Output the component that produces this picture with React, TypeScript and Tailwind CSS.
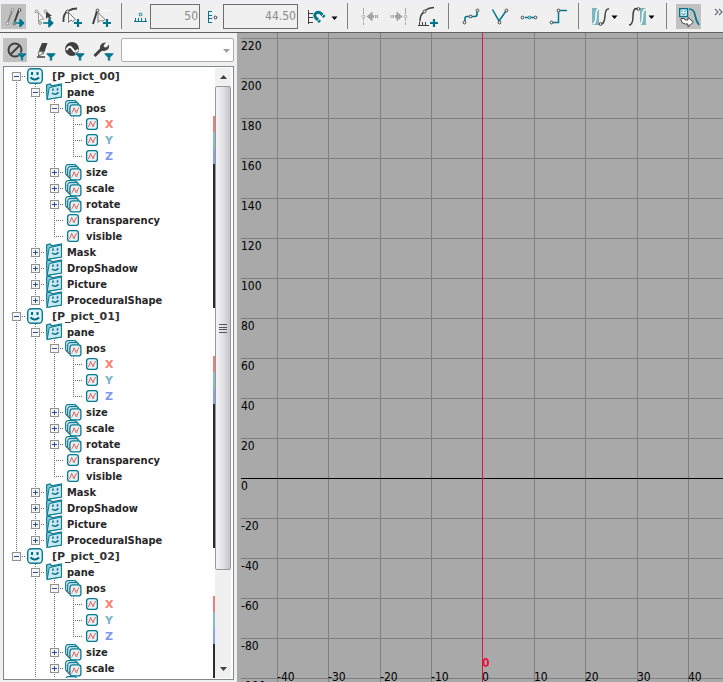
import type { ReactNode } from "react";

const TEAL = "#00758c";
const DARK = "#404040";

type NodeKind = "root" | "folder" | "group" | "curve";
type TreeNode = {
  label: string;
  kind: NodeKind;
  tone?: "x" | "y" | "z";
  open?: boolean;
  strip?: boolean;
  children?: TreeNode[];
};

const axes: TreeNode[] = [
  { label: "X", kind: "curve", tone: "x" },
  { label: "Y", kind: "curve", tone: "y" },
  { label: "Z", kind: "curve", tone: "z" },
];

function picture(label: string): TreeNode {
  return {
    label,
    kind: "root",
    open: true,
    children: [
      {
        label: "pane",
        kind: "folder",
        open: true,
        children: [
          { label: "pos", kind: "group", open: true, children: axes },
          { label: "size", kind: "group", strip: true },
          { label: "scale", kind: "group", strip: true },
          { label: "rotate", kind: "group", strip: true },
          { label: "transparency", kind: "curve", strip: true },
          { label: "visible", kind: "curve", strip: true },
        ],
      },
      { label: "Mask", kind: "folder", strip: true },
      { label: "DropShadow", kind: "folder", strip: true },
      { label: "Picture", kind: "folder", strip: true },
      { label: "ProceduralShape", kind: "folder", strip: true },
    ],
  };
}

const pictures = [picture("[P_pict_00]"), picture("[P_pict_01]"), picture("[P_pict_02]")];

const toneText = { x: "text-[#f0826e]", y: "text-[#7cb6c8]", z: "text-[#8296f0]" };
const toneStrip = { x: "bg-[#f07d78]", y: "bg-[#87bcc8]", z: "bg-[#8ca0f5]" };

function NodeIcon({ kind }: { kind: NodeKind }) {
  return (
    <svg width="18" height="16" viewBox="0 0 18 16" className="shrink-0 overflow-visible" aria-hidden="true">
      {kind === "root" && (
        <>
          <rect x="1.7" y="0.7" width="14.6" height="14.6" rx="3.5" fill="#dcf1f5" stroke="#087a91" strokeWidth="1.4" />
          <path d="M6 4v3M11.5 4v3" stroke="#006e87" strokeWidth="2" />
          <path d="M4.5 9.5q4.3 4 8.6 0" fill="none" stroke="#006e87" strokeWidth="2" />
        </>
      )}
      {kind === "folder" && (
        <>
          <path d="M1.600 3.200V1L5.200 0 6.800 1.800 16.400 0V13L2 15.300Z" fill="#8fc9d6" stroke="#087a91" strokeWidth="1.200" />
          <path d="M4.300 3.600 16.400 1V13L2.200 15.300Z" fill="#c9e9ef" stroke="#087a91" />
          <path d="M8 4.600v2.200M12.500 4.200v2.200" stroke="#006e87" strokeWidth="1.500" />
          <path d="M7 9q3.300 2.600 6.500-.6" fill="none" stroke="#006e87" strokeWidth="1.500" />
        </>
      )}
      {kind === "group" && (
        <>
          <rect x="1.700" y="0.700" width="11" height="11" rx="2.500" fill="#f2fbfc" stroke="#087a91" strokeWidth="1.200" />
          <path d="M2.500 11 4 9" stroke="#e8403c" />
          <rect x="3.700" y="2.700" width="11" height="11" rx="2.500" fill="#f2fbfc" stroke="#087a91" strokeWidth="1.200" />
          <path d="M4.500 13 6 11" stroke="#e8403c" />
          <rect x="5.900" y="4.900" width="11" height="11" rx="2.500" fill="#e2f3f6" stroke="#087a91" strokeWidth="1.300" />
          <path d="M7.300 13.300 8.400 12.300 10 7.800 12.500 13 14.200 8.500 15.600 7.200" fill="none" stroke="#ee5a56" />
        </>
      )}
      {kind === "curve" && (
        <>
          <rect x="3.600" y="2.600" width="10.800" height="10.800" rx="2.500" fill="#e2f3f6" stroke="#087a91" strokeWidth="1.300" />
          <path d="M4.900 11 6 10 7.600 5.500 10.100 10.700 11.800 6.200 13.200 4.900" fill="none" stroke="#ee5a56" />
        </>
      )}
    </svg>
  );
}

function Dots({ up, down, right }: { up?: boolean; down?: boolean; right?: boolean }) {
  return (
    <svg width="19" height="16" viewBox="0 0 19 16" className="shrink-0" shapeRendering="crispEdges" stroke="#6e6e6e" strokeDasharray="1 1" aria-hidden="true">
      {up && <path d="M9.500 0V8" />}
      {down && <path d="M9.500 8V16" />}
      {right && <path d="M9 8.500H19" />}
    </svg>
  );
}

function Expander({ open, label }: { open?: boolean; label: string }) {
  return (
    <button type="button" aria-label={`${open ? "Collapse" : "Expand"} ${label}`} className="absolute top-1 left-[5px] size-[9px]">
      <svg width="9" height="9" viewBox="0 0 9 9" shapeRendering="crispEdges" className="block">
        <rect x="0.500" y="0.500" width="8" height="8" fill="#f6f6f6" stroke="#919191" />
        <path d={open ? "M2 4.500H7" : "M2 4.500H7M4.500 2V7"} stroke="#2b4ba0" />
      </svg>
    </button>
  );
}

function Branch({ node, trail, last, first }: { node: TreeNode; trail: boolean[]; last: boolean; first: boolean }) {
  const expandable = node.kind !== "curve";
  const strip = node.tone ? toneStrip[node.tone] : node.strip ? "bg-[#2d2d2d]" : "";
  const slot = node.kind === "root" ? "w-[26px]" : "w-[22px]";
  const face =
    node.kind === "root"
      ? "font-['DejaVu_Sans',sans-serif] text-[#333333]"
      : node.tone
        ? `font-['DejaVu_Sans',sans-serif] ${toneText[node.tone]}`
        : "text-[#262626]";
  return (
    <li role="treeitem" aria-expanded={node.children ? true : undefined}>
      <div className="flex h-4 items-center pl-[3px]">
        {trail.map((on, i) => (
          <Dots key={i} up={on} down={on} />
        ))}
        <span className="relative flex shrink-0">
          <Dots up={!first} down={!last} right />
          {expandable && <Expander open={node.open} label={node.label} />}
        </span>
        <span className={`flex shrink-0 ${slot}`}>
          <NodeIcon kind={node.kind} />
        </span>
        <span className={`pt-0.5 text-[11px] leading-4 font-bold whitespace-nowrap ${face}`}>{node.label}</span>
        <span className={`ml-auto h-4 w-0.5 shrink-0 ${strip}`} />
      </div>
      {node.children && (
        <ul role="group">
          {node.children.map((child, i) => (
            <Branch
              key={child.label}
              node={child}
              trail={[...trail, !last]}
              last={i === node.children!.length - 1}
              first={false}
            />
          ))}
        </ul>
      )}
    </li>
  );
}

function Tool({ label, box, className = "", children }: { label: string; box: string; className?: string; children: ReactNode }) {
  const [, , w, h] = box.split(" ").map(Number);
  return (
    <button type="button" aria-label={label} className={`shrink-0 ${className}`}>
      <svg width={w} height={h} viewBox={box} fill="none" className="block">
        {children}
      </svg>
    </button>
  );
}

const Separator = ({ className = "" }: { className?: string }) => (
  <span className={`h-[26px] w-px shrink-0 bg-[#828282] ${className}`} />
);

const Ring = ({ x, y, c = DARK }: { x: number; y: number; c?: string }) => (
  <circle cx={x} cy={y} r="1.4" fill="#f4f4f4" stroke={c} />
);

const Plus = ({ x, y }: { x: number; y: number }) => (
  <path d={`M${x - 4} ${y}H${x + 4}M${x} ${y - 4}V${y + 4}`} stroke={TEAL} strokeWidth="2.2" />
);

const Arrow = ({ x, y }: { x: number; y: number }) => (
  <path
    d={`M${x - 6} ${y - 1}h5v-3.500h1.500l4.500 4.500-4.500 4.500h-1.500v-3.500h-5z`}
    fill={TEAL}
    stroke="#f4f4f4"
    strokeWidth="0.400"
  />
);

const Funnel = ({ x, y }: { x: number; y: number }) => (
  <path d={`M${x - 4.5} ${y}h9v1.2l-3.2 3.2v3.4h-2.6v-3.4l-3.2-3.2z`} fill={TEAL} stroke="#f4f4f4" strokeWidth="0.4" />
);

function TopToolbar() {
  return (
    <header className="flex h-[33px] shrink-0 items-center overflow-hidden border-b border-[#606060] bg-gradient-to-b from-[#ededf5] to-[#f0f0f0] to-10% pl-px">
      <div className="flex shrink-0 gap-1">
        <Tool label="Move keys" box="1 4 25 25" className="bg-[#c1c1c1]">
          <path d="M8 22 12 11" stroke="#8a8a8a" strokeWidth="2" />
          <path d="M14.500 22 18.500 11" stroke={DARK} strokeWidth="2" />
          <Ring x={12.5} y={10} c="#8a8a8a" /><Ring x={7.5} y={23.5} c="#8a8a8a" />
          <Ring x={19.5} y={10} /><Ring x={14.5} y={23.5} />
          <Arrow x={20} y={23} />
        </Tool>
        <Tool label="Select and move" box="30 4 25 25">
          <path d="M38.500 12.500V21.500L40.500 19.500 44 19Z" fill="#f4f4f4" stroke="#999" />
          <path d="M46 11v8l2-2 1.500 3 2-1-1.600-3H52Z" fill={DARK} />
          <Ring x={36.5} y={11.5} c="#888" /><Ring x={45.5} y={11.5} c="#888" /><Ring x={40} y={23} c="#888" />
          <Arrow x={49} y={23} />
        </Tool>
        <Tool label="Add key on curve" box="59 4 25 25">
          <path d="M63.500 22C63 16 65 12.500 68 11M69 10.500Q72 8.500 77 8.500" stroke={DARK} strokeWidth="1.800" />
          <path d="M68.500 12.500V22.500L71 20 72.500 21.500 75.500 19.500Z" fill="#f4f4f4" stroke="#777" />
          <Ring x={67.5} y={11.5} /><Plus x={78} y={23} />
        </Tool>
        <Tool label="Add linear key" box="88 4 25 25">
          <path d="M93 24 97 11" stroke={DARK} strokeWidth="2" />
          <path d="M98 10.500H110" stroke="#fff" />
          <path d="M98 12.500V22.500L100.500 20 102 21.500 105 19.500Z" fill="#f4f4f4" stroke="#777" />
          <Ring x={97.5} y={10.5} /><Plus x={107} y={23} />
        </Tool>
      </div>
      <Separator className="mx-2" />
      <Tool label="Frame step" box="130 4 20 25">
        <path d="M134 21.500H147M135.500 18V21M138.500 18V21M141.500 18V21M145.500 18V21" stroke={TEAL} />
        <Ring x={140.5} y={14.5} c={TEAL} />
      </Tool>
      <input aria-label="Frame" defaultValue="50" className="h-[25px] w-[50px] shrink-0 border border-[#6e6e6e] bg-[#f0f0f0] pr-px pb-px text-right text-[12px] text-[#8b8b8b] outline-none" />
      <Tool label="Value step" box="200 4 23 25">
        <path d="M208.500 11V23M209 11.500H212M209 15.500H212M209 18.500H212M209 22.500H212" stroke={TEAL} />
        <Ring x={215.5} y={17.5} c="#333366" />
      </Tool>
      <input aria-label="Value" defaultValue="44.50" className="h-[25px] w-[75px] shrink-0 border border-[#6e6e6e] bg-[#f0f0f0] pr-px pb-px text-right text-[12px] text-[#8b8b8b] outline-none" />
      <Tool label="Snap" box="304 4 36 25" className="ml-1.5">
        <path d="M308.500 10V24M309 13.500H313M309 17.500H313M309 22.500H313" stroke={DARK} />
        <path d="M320 22 315.500 17.500Q313.500 14.500 316.500 12.700 319 11.500 321 13.500L324.500 17" stroke={TEAL} strokeWidth="3" />
        <path d="M317 21.500 320 18.500M321 17 324 14" stroke="#fff" />
        <path d="M331.500 16.500h6l-3 3.500z" fill="#000" />
      </Tool>
      <Separator className="mr-2 ml-[7px]" />
      <Tool label="Previous key" box="356 4 28 25">
        <path d="M363.500 8V25" stroke="#aaa" strokeDasharray="6 1" />
        <Ring x={363.5} y={16.5} c="#aaa" />
        <path d="M366.500 16.500 372.500 11.500V15H374V18H372.500V21.500ZM375 15h1.500v3H375zM377 15h1v3h-1z" fill="#a2a2a2" />
      </Tool>
      <Tool label="Next key" box="384 4 28 25">
        <path d="M405.500 8V25" stroke="#aaa" strokeDasharray="6 1" />
        <Ring x={405.5} y={16.5} c="#aaa" />
        <path d="M402.500 16.500 396.500 11.500V15H395V18H396.500V21.500ZM392.500 15h1.500v3h-1.500zM390.500 15h1v3h-1z" fill="#a2a2a2" />
      </Tool>
      <Tool label="Insert key" box="414 4 27 25" className="ml-0.5">
        <path d="M420 21.500C420 17 421 14 423.500 12.500M425 10.500Q429 7.500 434 7.500" stroke={DARK} strokeWidth="1.500" />
        <path d="M418 25.500H429M419.500 22V25M422.500 22V25M425.500 22V25" stroke={DARK} />
        <Ring x={424.5} y={11.5} /><Plus x={434} y={23} />
      </Tool>
      <Separator className="mr-[9px] ml-[7px]" />
      <div className="flex shrink-0 gap-[3px]">
        <Tool label="Spline tangents" box="458 4 26 25">
          <path d="M465 21V18.500Q465 16.500 467 16.500H475Q477 16.500 477 14V12" stroke={TEAL} strokeWidth="1.600" />
          <Ring x={464.5} y={22.5} /><Ring x={470.5} y={16.5} /><Ring x={477.5} y={10.5} />
        </Tool>
        <Tool label="Linear tangents" box="487 4 26 25">
          <path d="M492.500 9.500 499 21 506 11" stroke={TEAL} strokeWidth="1.500" />
          <Ring x={499.5} y={22.5} /><Ring x={506.5} y={10.5} />
        </Tool>
        <Tool label="Flat tangents" box="516 4 26 25">
          <path d="M525 17.500H534" stroke={TEAL} strokeWidth="1.500" />
          <Ring x={522.5} y={17.5} /><Ring x={529.5} y={17.5} c={TEAL} /><Ring x={535.5} y={17.5} />
        </Tool>
        <Tool label="Step tangents" box="545 4 26 25">
          <path d="M553 22.500H558.500V10.500H567" stroke={TEAL} strokeWidth="1.500" />
          <Ring x={551.5} y={22.5} /><Ring x={558.5} y={10.5} />
        </Tool>
      </div>
      <Separator className="mx-[7px]" />
      <Tool label="Pre infinity" box="586 4 37 25">
        <path d="M592 8h7v17h-7z" fill="#7db6bd" />
        <path d="M592.500 24Q596 24 596 16T600 8" stroke="#fff" strokeWidth="1.500" />
        <path d="M601 24Q604.500 24 605 16T609 9" stroke={DARK} strokeWidth="1.500" />
        <Ring x={600.5} y={24} />
        <path d="M611.500 15.500h6l-3 3.500z" fill="#000" />
      </Tool>
      <Tool label="Post infinity" box="623 4 37 25">
        <path d="M640 8h6v17h-6z" fill="#7db6bd" />
        <path d="M629 25Q633 25 633 16T638 9" stroke={DARK} strokeWidth="1.500" />
        <path d="M639.500 25Q642.500 23 642.500 16T647 9" stroke="#fff" strokeWidth="1.500" />
        <Ring x={638.5} y={9} />
        <path d="M648.500 15.500h6l-3 3.500z" fill="#000" />
      </Tool>
      <Separator className="mr-[9px] ml-1.5" />
      <Tool label="Show object curves" box="676 4 25 25" className="bg-[#c1c1c1]">
        <rect x="679.700" y="8.700" width="7.800" height="7.800" fill="#eef8fa" stroke={TEAL} strokeWidth="1.400" />
        <path d="M682 10.500v1.500M685 10.500v1.500" stroke={TEAL} />
        <path d="M681.500 13.500q2 2 4 0" stroke={TEAL} />
        <path d="M689 9Q694 9 695 15T699 25" stroke={TEAL} strokeWidth="1.700" />
        <path d="M681 18.500V20Q681.500 24 685.500 24H688V27L693.500 22 688 17.500V20H685.500Q684.500 20 684.500 18.500Z" fill="#fff" stroke={DARK} />
      </Tool>
      <Tool label="More tools" box="712 1 10 25" className="ml-auto">
        <path d="M714 6l3 3-3 3M718 6l3 3-3 3" stroke="#707080" strokeWidth="1.300" />
      </Tool>
    </header>
  );
}

function FilterBar() {
  return (
    <div className="flex h-[33px] shrink-0 items-center gap-[5px] pr-[3px] pl-[3px]">
      <Tool label="Hide filtered" box="3 38 24 24" className="bg-[#c1c1c1]">
        <circle cx="15" cy="50" r="6.500" stroke={DARK} strokeWidth="2" />
        <path d="M10.500 54.500 19.500 45.500" stroke={DARK} strokeWidth="2" />
        <Funnel x={22} y={53} />
      </Tool>
      <Tool label="Edit filter" box="32 38 24 24">
        <path d="M42 43 47.500 43 44.500 52 39.500 51 39 50Z" fill={DARK} />
        <path d="M39 51 44 53 38.500 56Z" fill="#fff" stroke={DARK} strokeWidth="0.800" />
        <path d="M37 57H45" stroke={DARK} strokeWidth="1.500" />
        <Funnel x={51} y={53} />
      </Tool>
      <Tool label="Curve filter" box="61 38 24 24">
        <circle cx="72" cy="49" r="7" fill={DARK} />
        <path d="M66.500 50Q69.500 44 72.500 49T78 49.500" stroke="#fff" strokeWidth="2" />
        <Funnel x={80} y={53} />
      </Tool>
      <Tool label="Filter settings" box="90 38 24 24">
        <path d="M94.500 56 102 48.500" stroke={DARK} strokeWidth="3" />
        <path d="M106 42.500 103.500 45.500 104.500 47.500 107 47 109 44.500Q110 50 104 51Q99.500 51 100 47Q100.500 42.500 106 42.500Z" fill={DARK} />
        <Funnel x={109} y={53} />
      </Tool>
      <div className="relative ml-0.5 h-6 flex-1">
        <select aria-label="Filter" className="block h-6 w-full appearance-none rounded-[2px] border border-[#adadad] bg-white outline-none">
          <option></option>
        </select>
        <svg width="7" height="4" viewBox="0 0 7 4" className="pointer-events-none absolute top-[11px] right-1">
          <path d="M0 0h7L3.500 4z" fill="#a0a0a0" />
        </svg>
      </div>
    </div>
  );
}

function ScrollBar() {
  return (
    <div className="flex w-4 shrink-0 flex-col bg-[#f0f0f0]">
      <button type="button" aria-label="Scroll up" className="flex h-[18px] shrink-0 items-center justify-center">
        <svg width="7" height="4" viewBox="0 0 7 4"><path d="M0 4h7L3.500 0z" fill="#404040" /></svg>
      </button>
      <div className="min-h-0 flex-1">
        <div className="flex h-[84.4%] items-center justify-center rounded-[2px] border border-[#979797] bg-gradient-to-r from-[#f5f5f5] via-[#e2e2e6] to-[#c4c4c8]">
          <svg width="8" height="9" viewBox="0 0 8 9" shapeRendering="crispEdges" stroke="#555">
            <path d="M0 .5H8M0 3.500H8M0 5.500H8M0 8.500H8" />
          </svg>
        </div>
      </div>
      <button type="button" aria-label="Scroll down" className="flex h-[18px] shrink-0 items-center justify-center">
        <svg width="7" height="4" viewBox="0 0 7 4"><path d="M0 0h7L3.500 4z" fill="#404040" /></svg>
      </button>
    </div>
  );
}

const columns = [
  { x: 40, t: "-40" }, { x: 91, t: "-30" }, { x: 143, t: "-20" }, { x: 194, t: "-10" }, { x: 245, t: "0" },
  { x: 297, t: "10" }, { x: 348, t: "20" }, { x: 400, t: "30" }, { x: 451, t: "40" },
];
const rows = Array.from({ length: 17 }, (_, i) => ({ y: 5 + i * 40, value: 220 - i * 20 }));

function Graph() {
  return (
    <main className="min-w-0 flex-1 overflow-hidden bg-[#a9a9a9]">
      <svg width="100%" height="100%" className="block text-[12px]" role="img" aria-label="Curve graph">
        <g shapeRendering="crispEdges" stroke="#808080">
          {columns.map((c) => (
            <line key={c.t} x1={c.x + 0.5} x2={c.x + 0.5} y1="0" y2="100%" />
          ))}
          {rows.map((r) => (
            <line key={r.value} x1="4" x2="100%" y1={r.y + 0.5} y2={r.y + 0.5} stroke={r.value === 0 ? "#000" : undefined} />
          ))}
          <line x1="245.500" x2="245.500" y1="0" y2="100%" stroke="#e6143c" />
        </g>
        {rows.map((r) => (
          <text key={r.value} x="4" y={r.y + 12}>{r.value}</text>
        ))}
        {columns.map((c) => (
          <text key={c.t} x={c.x} y="100%" dy="-1">{c.t}</text>
        ))}
        <text x="245" y="100%" dy="-15" fill="#e6143c" className="font-bold">0</text>
      </svg>
    </main>
  );
}

export default function App() {
  return (
    <div className="flex h-screen flex-col overflow-hidden bg-[#f0f0f0] font-['DejaVu_Sans_Condensed','DejaVu_Sans',sans-serif]">
      <TopToolbar />
      <div className="flex min-h-0 flex-1">
        <aside className="flex w-[237px] shrink-0 flex-col pb-0.5">
          <FilterBar />
          <div className="mx-[3px] flex min-h-0 flex-1 border border-[#828790] bg-white py-px pr-0.5">
            <ul role="tree" aria-label="Animated nodes" className="min-w-0 flex-1 overflow-x-hidden overflow-y-auto [scrollbar-width:none]">
              {pictures.map((p, i) => (
                <Branch key={p.label} node={p} trail={[]} last={i === pictures.length - 1} first={i === 0} />
              ))}
            </ul>
            <ScrollBar />
          </div>
        </aside>
        <Graph />
      </div>
    </div>
  );
}
